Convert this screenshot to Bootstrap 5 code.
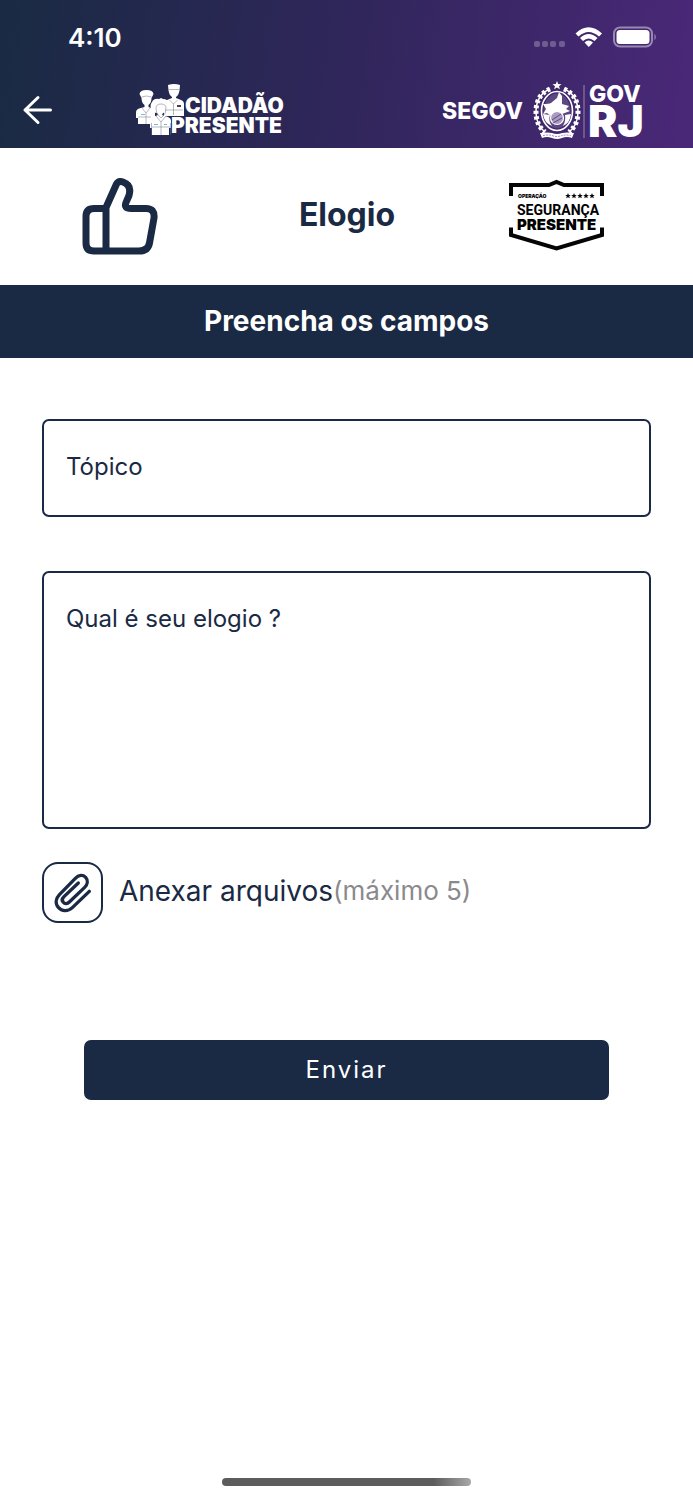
<!DOCTYPE html>
<html lang="pt-BR">
<head>
<meta charset="utf-8">
<meta name="viewport" content="width=device-width, initial-scale=1">
<title>Elogio - Cidadão Presente</title>
<link href="https://cdn.jsdelivr.net/npm/bootstrap@5.3.0/dist/css/bootstrap.min.css" rel="stylesheet">
<style>
  :root { --navy: #1a2944; }
  body { font-family: Inter, "Liberation Sans", sans-serif; color: var(--navy); background: #fff; }
  svg { display: block; flex: none; }
  .app-header { background: linear-gradient(97deg, #1a2a44 2%, #2f265a 48%, #4a2878 100%); color: #fff; }
  .status-bar { height: 76px; padding: 0 36px 0 68px; }
  .clock { font-size: 26px; line-height: 32px; font-weight: 600; }
  .brand-bar { height: 72px; padding: 0 50px 0 22px; }
  .back-btn { padding: 0; border: 0; margin-right: 82px; }
  .title-row { height: 137px; padding: 0 89px 0 82px; }
  .page-title { font-size: 32px; line-height: 40px; font-weight: 700; padding-bottom: 4px; }
  .banner { background: var(--navy); color: #fff; height: 73px; font-size: 28px; line-height: 36px; font-weight: 700; padding-bottom: 2px; }
  .form-area { padding: 61px 42px 0; }
  .field { border: 2px solid var(--navy); border-radius: 7px; font-size: 24px; line-height: 32px; padding: 28px 22px 32px; color: var(--navy); }
  .field::placeholder { color: var(--navy); opacity: 1; }
  .field-topic { height: 98px; margin-bottom: 54px; }
  .field-message { height: 258px; margin-bottom: 33px; padding-top: 30px; resize: none; }
  .attach-btn { width: 61px; height: 61px; border: 2px solid var(--navy); border-radius: 16px; padding: 0; margin-right: 16px; }
  .attach-label { font-size: 28px; line-height: 36px; padding-bottom: 4px; }
  .attach-hint { font-size: 26px; line-height: 36px; padding-bottom: 4px; color: #8a8a8d; }
  .send-wrap { padding: 117px 42px 0; }
  .send-btn { background: var(--navy); color: #fff; height: 60px; border: 0; border-radius: 7px; font-size: 24px; line-height: 32px; letter-spacing: 2px; }
  .send-btn:hover { background: #243759; color: #fff; }
  .home-bar { width: 36%; height: 8px; margin-bottom: 14px; border-radius: 4px; background: linear-gradient(90deg, #5c5c5c 85%, #a8a8a8); }
</style>
</head>
<body>
<div class="d-flex flex-column min-vh-100">
  <header class="app-header">
    <div class="status-bar d-flex align-items-center justify-content-between">
      <span class="clock">4:10</span>
      <svg width="124" height="24" viewBox="0 0 124 24" fill="#fff" aria-hidden="true">
        <g opacity=".25"><rect x="1" y="15" width="6" height="6" rx="2"/><rect x="9" y="15" width="6" height="6" rx="2"/><rect x="17" y="15" width="6" height="6" rx="2"/><rect x="26" y="15" width="6" height="6" rx="2"/></g>
        <path d="M42.500 7.500Q55.500-5 69 7.500L66 10.500Q55.500 1.500 45.500 10.500Z"/>
        <path d="M47 12Q55.500 4 64.500 12L61.500 15Q55.500 10 50 15Z"/>
        <path d="M51.500 16.500Q55.500 12.500 60 16.500L55.800 21Z"/>
        <rect x="81" y="1.500" width="38" height="19" rx="6" fill="none" stroke="#fff" stroke-opacity=".45" stroke-width="2"/>
        <rect x="83.500" y="4" width="33" height="14" rx="3.500"/>
        <path d="M121.500 7.500Q124 11 121.500 14.500Z" opacity=".5"/>
      </svg>
    </div>
    <div class="brand-bar d-flex align-items-center">
      <button type="button" class="btn back-btn mb-1" aria-label="Voltar">
        <svg width="32" height="32" viewBox="0 0 32 32" fill="none" stroke="#fff" stroke-width="3" stroke-linecap="round" stroke-linejoin="round"><path d="M28.500 16H3M16 3.500 3 16l13 12.500"/></svg>
      </button>
      <svg width="152" height="56" viewBox="0 0 152 56" role="img" aria-label="Cidadão Presente">
        <g fill="#fff">
          <path d="M32 1q6-2 12 0l-.5 5.500q-1 5-3.500 6.500v1l5 2q3 1 3 4v12H28V20q0-3 3-4l5-2v-1q-2.500-1.500-3.500-6.500z"/>
          <path d="M3.500 10Q4 6 10.500 6t7 4l-2 4q0 5-3 7v2l4 1.500q2.500 1 2.500 4V40H2v-6H0v-5.500q0-3 3-4L8.500 23v-2q-3-2-3-7z"/>
          <path d="M16 26q-3-4 0-8 2-4 7-3l2-1 2 1q5 0 6 5 1 4-2 7-1 2-4 2l-1 2 6 2q3 1 3 4v7h-2v7H16v-7h-2v-7q0-3 3-4l5-2-1-2q-4 0-5-3z"/>
        </g>
        <g fill="none" stroke="#6d6d80" stroke-width=".5">
          <path d="M32.500 5.500h11M33.500 16l4 4 4-4M37.500 20v11M29 26h18M5.500 13q5-2 10 0M6 24l4 5 4-5M10 29v11M2 33h13M20 24q0-4 5-4t5 4q0 6-3 8l-2 2-2-2q-3-2-3-8M20 32l5 6 5-6M25 38v13M16 43h18"/>
          <path d="M15.500 51V39M34.500 51V39"/>
        </g>
        <path d="M41 21h4v2h-4z" fill="#444"/><path d="M5 30h4v1H5zM18 40h4v1h-4zM28 40h3v1h-3z" fill="#79b8dd"/>
        <g fill="#fff" font-family="Inter, sans-serif" font-weight="800"><text x="49" y="29" font-size="21" font-weight="900">CIDADÃO</text><text x="35" y="49" font-size="21" font-weight="900">PRESENTE</text></g>
      </svg>
      <svg class="ms-auto" width="202" height="72" viewBox="0 -5 202 72" role="img" aria-label="SEGOV GOV RJ">
        <g fill="#fff" font-family="Inter, sans-serif" font-weight="900"><text x="1" y="38" font-size="23" font-weight="800">SEGOV</text><text x="148" y="21" font-size="23" font-weight="800">GOV</text><text x="147" y="56" font-size="44">RJ</text></g>
        <path d="M143 4v53" stroke="#fff" stroke-opacity=".45"/>
        <g transform="translate(92 0)">
          <path d="m24 0 1.200 3 3.300.2-2.500 2 .9 3.100L24 6.500l-2.900 1.800.9-3.100-2.500-2 3.300-.2z" fill="#fff"/>
          <ellipse cx="24" cy="30" rx="15.500" ry="19.500" fill="none" stroke="#fff" stroke-width="1.600"/>
          <ellipse cx="24" cy="30" rx="13.500" ry="17.500" fill="#fff" fill-opacity=".15"/>
          <path d="M10 23q6 0 8-1l6-5 2-6 3 4v8l7 2-3 3 4 2-8 3-5-1-6 3-4-3-4 1 3-5z" fill="#fff"/>
          <path d="M10 33l7 1q-2 6 2 11-8-3-9-12zm28 0-6 1q1 6-2 11 7-3 8-12z" fill="#fff"/>
          <circle cx="24" cy="37" r="6.500" fill="#a99abf" stroke="#fff" stroke-width="1.200"/><path d="m19 39 9-6M20 42l9-5" stroke="#4a3475" stroke-width=".8"/>
          <path d="M17 8Q3 14 3 31q0 13 9 20M31 8q14 6 14 23 0 13-9 20" fill="none" stroke="#fff" stroke-width="1.500"/>
          <path d="M17 8Q3 14 3 31q0 13 9 20M31 8q14 6 14 23 0 13-9 20" fill="none" stroke="#fff" stroke-width="5" stroke-dasharray="3 2.500"/>
          <path d="M7 52q8-1 12 0 5 2 10 0 5-1 12 0l-2 5q-5-2-10 0t-10 0q-5-2-10 0z" fill="#fff"/><path d="M10 54.500q5-1 9 0 5 2 10 0 4-1 9 0" fill="none" stroke="#8069a3" stroke-width=".8" stroke-dasharray="2 1"/>
        </g>
      </svg>
    </div>
  </header>

  <div class="title-row row g-0 align-items-center">
    <div class="col">
      <svg width="77" height="77" viewBox="0 0 77 77" fill="none" stroke="#1a2944" stroke-width="7" stroke-linejoin="round" aria-hidden="true">
        <path d="M24 30.500H12q-8 0-8 8V65q0 8 8 8h45q9 0 10.500-8L72 40q1-9.500-8-9.500H49q-7.500 0-5-6l3-7q3-10.500-6-13.500Q36.500 2.500 34.500 6L24 29.500V73"/>
      </svg>
    </div>
    <h1 class="page-title col-auto m-0 ms-2">Elogio</h1>
    <div class="col d-flex justify-content-end">
      <svg width="95" height="76" viewBox="0 -4 95 76" role="img" aria-label="Operação Segurança Presente">
        <path d="M2 13V2h38L47.500-1 55 2h38v11M2 44.500V52l45.500 13.500L93 52v-7.500" fill="none" stroke="#050505" stroke-width="4"/>
        <text x="9" y="15" font-family="Inter, sans-serif" font-weight="900" font-size="5">OPERAÇÃO</text>
        <g fill="#050505"><path id="star" d="m59 10 .8 1.900 2 .1-1.600 1.300.6 2-1.800-1.100-1.800 1.100.6-2-1.600-1.300 2-.1z"/><use href="#star" x="6"/><use href="#star" x="12"/><use href="#star" x="18"/><use href="#star" x="24"/></g>
        <text x="8" y="32" font-family="Roboto, sans-serif" font-weight="700" font-size="14">SEGURANÇA</text>
        <text x="8" y="47" font-family="Inter, sans-serif" font-weight="900" font-size="15">PRESENTE</text>
      </svg>
    </div>
  </div>

  <h2 class="banner d-flex align-items-center justify-content-center m-0">Preencha os campos</h2>

  <main class="flex-grow-1">
    <form class="form-area">
      <label class="visually-hidden" for="topico">Tópico</label>
      <input id="topico" type="text" class="form-control field field-topic" placeholder="Tópico">
      <label class="visually-hidden" for="mensagem">Qual é seu elogio ?</label>
      <textarea id="mensagem" class="form-control field field-message" placeholder="Qual é seu elogio ?"></textarea>
      <div class="d-flex align-items-center">
        <button type="button" class="btn attach-btn d-flex align-items-center justify-content-center" aria-labelledby="anexar">
          <svg width="38" height="40" viewBox="69 67 114 120" fill="none" stroke="#1a2944" stroke-width="10" stroke-linecap="round" stroke-linejoin="round" aria-hidden="true"><path d="M175 122 124 171C110 184 92 182 82 170 72 158 74 143 86 131L133 83C143 72 156 72 164 80 172 89 170 101 161 110L115 154C109 160 101 160 97 155 92 150 93 144 99 138L142 97"/></svg>
        </button>
        <span id="anexar" class="attach-label">Anexar arquivos</span><span class="attach-hint">(máximo 5)</span>
      </div>
      <div class="send-wrap"><button type="submit" class="btn send-btn w-100">Enviar</button></div>
    </form>
  </main>

  <div class="home-bar mx-auto"></div>
</div>
<script src="https://cdn.jsdelivr.net/npm/bootstrap@5.3.0/dist/js/bootstrap.bundle.min.js"></script>
</body>
</html>
